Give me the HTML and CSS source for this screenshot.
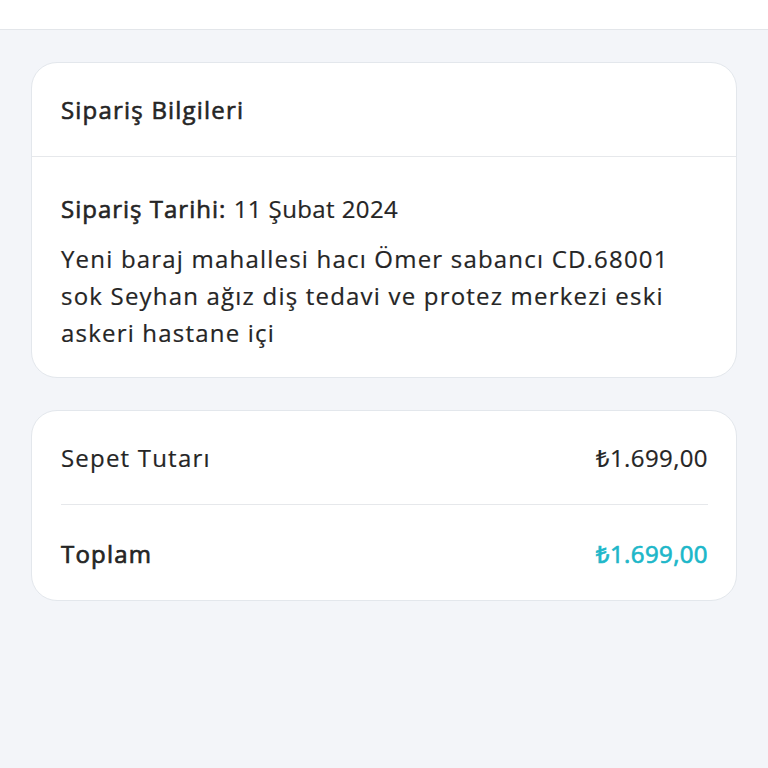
FILE: index.html
```html
<!DOCTYPE html>
<html lang="tr">
<head>
<meta charset="utf-8">
<link rel="stylesheet" href="styles.css">
</head>
<body>
<header class="topbar"></header>
<main class="content">
  <section class="card">
    <div class="card-header">Sipariş Bilgileri</div>
    <div class="card-body">
      <p class="date"><span class="label">Sipariş Tarihi:</span> <span class="num">11 Şubat 2024</span></p>
      <p class="address">Yeni baraj mahallesi hacı Ömer sabancı CD.68001 sok Seyhan ağız diş tedavi ve protez merkezi eski askeri hastane içi</p>
    </div>
  </section>
  <section class="card summary">
    <div class="row">
      <span>Sepet Tutarı</span>
      <span class="num">₺1.699,00</span>
    </div>
    <div class="row total">
      <span>Toplam</span>
      <span class="num total-amount">₺1.699,00</span>
    </div>
  </section>
</main>
</body>
</html>
```

FILE: styles.css
```css
* { box-sizing: border-box; }
html, body {
  margin: 0;
  padding: 0;
  background: #f3f5f9;
  font-family: "Open Sans", "Noto Sans", sans-serif;
  color: #252525;
  font-size: 24px;
  line-height: 37px;
  letter-spacing: 1.2px;
  -webkit-text-stroke: 0.2px currentColor;
}
.topbar {
  height: 30px;
  background: #ffffff;
  border-bottom: 1px solid #e3e6ea;
}
.content {
  padding: 32px 31px;
  display: flex;
  flex-direction: column;
  gap: 32px;
}
.card {
  background: #ffffff;
  border: 1px solid #e3e7ec;
  border-radius: 26px;
}
.card-header {
  padding: 28px 29px;
  border-bottom: 1px solid #e6e8eb;
  -webkit-text-stroke: 0.6px currentColor;
}
.card-body {
  padding: 33px 29px 26px;
  display: flex;
  flex-direction: column;
  gap: 13px;
}
.card-body p { margin: 0; }
.label { -webkit-text-stroke: 0.6px currentColor; letter-spacing: 1px; }
.num { letter-spacing: 0.4px; }
.summary { padding: 0 28px 0 29px; }
.row {
  display: flex;
  justify-content: space-between;
  padding: 28px 0;
  border-bottom: 1px solid #e6e8eb;
}
.row.total {
  border-bottom: none;
  padding: 30px 0 28px;
  -webkit-text-stroke: 0.7px currentColor;
}
.total-amount { color: #1db7c9; }
```
